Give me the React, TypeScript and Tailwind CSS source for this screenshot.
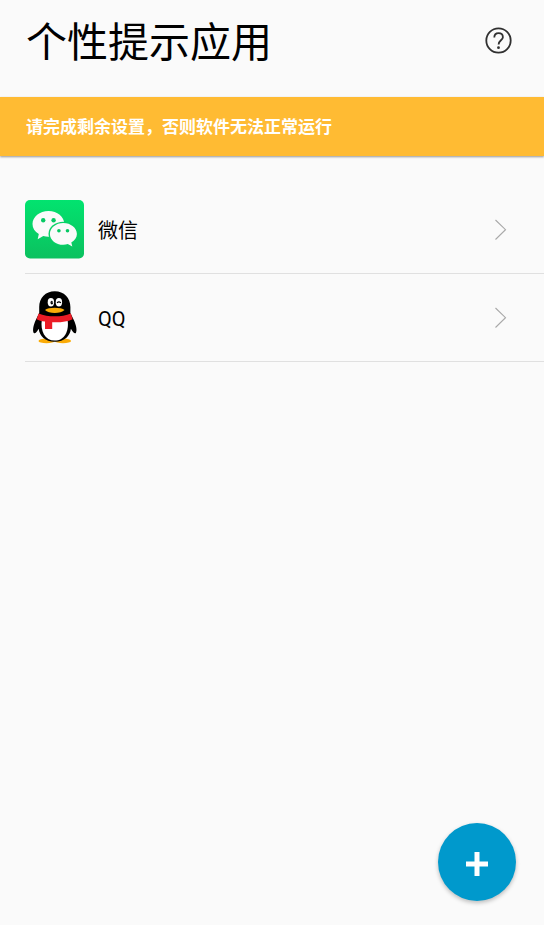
import type { ReactNode } from "react";

function WeChatIcon() {
  return (
    <svg viewBox="0 0 59 59" className="size-full" aria-hidden="true">
      <defs>
        <linearGradient id="wechat-green" x1="0" y1="0" x2="0" y2="1">
          <stop offset="0" stopColor="#02e36f" />
          <stop offset="1" stopColor="#0bc15f" />
        </linearGradient>
      </defs>
      <rect width="59" height="58.500" rx="5" fill="url(#wechat-green)" />
      <path
        d="M23.500 11C14.700 11 7.500 16.800 7.500 24C7.500 28.100 9.800 31.700 13.800 34.100L12.700 39.300L18.200 36C19.900 36.500 21.700 36.800 23.500 36.800C32.300 36.800 39.300 31.200 39.300 24C39.300 16.800 32.300 11 23.500 11Z"
        fill="#fafafa"
      />
      <ellipse cx="38.300" cy="33.800" rx="14.800" ry="12" fill="#07d166" />
      <path
        d="M38.300 23C30.800 23 24.900 28 24.900 33.900C24.900 39.900 30.800 44.800 38.300 44.800C39.800 44.800 41.400 44.500 42.800 44L47.300 46.500L46.300 42.600C49.800 40.300 51.900 37.300 51.900 33.900C51.900 28 45.800 23 38.300 23Z"
        fill="#fafafa"
      />
      <g fill="#05c963">
        <circle cx="18.200" cy="20.300" r="2.200" />
        <circle cx="28.600" cy="20.300" r="2.200" />
        <circle cx="33.900" cy="30.800" r="1.800" />
        <circle cx="42.500" cy="30.800" r="1.800" />
      </g>
    </svg>
  );
}

function QQIcon() {
  return (
    <svg viewBox="0 0 59 59" className="size-full" aria-hidden="true">
      <ellipse cx="21.500" cy="52.900" rx="8" ry="2.400" fill="#faab07" />
      <ellipse cx="38" cy="52.900" rx="8" ry="2.400" fill="#faab07" />
      <path
        d="M29.800 3.300C20.500 3.300 14.200 10 14.200 19V25L10.800 32C8.500 37 7.300 42 8.700 45C10 46.200 12 43.800 13.700 40.800C14.500 48 20 53.800 29.800 53.800C39.500 53.800 45.100 48 45.900 40.800C47.700 43.800 49.500 46.200 50.900 45C52.400 42 51.100 37 48.800 32L45.400 25V19C45.400 10 39 3.300 29.800 3.300Z"
        fill="#000"
      />
      <path d="M16.800 32H42.600C44.300 43 39.500 52.600 29.700 52.600S15.200 43 16.800 32Z" fill="#fff" />
      <ellipse cx="25.900" cy="14.300" rx="3.200" ry="4.200" fill="#fff" />
      <ellipse cx="33.900" cy="14.300" rx="3.200" ry="4.200" fill="#fff" />
      <ellipse cx="26.800" cy="14.600" rx="1.300" ry="1.900" fill="#000" />
      <circle cx="27.200" cy="14" r=".5" fill="#fff" />
      <path d="M32 15Q33.900 12.700 35.900 15" fill="none" stroke="#000" strokeWidth="1.100" />
      <path d="M20 22C23 19 36.500 19 39.500 22C36 25.900 23.500 25.900 20 22Z" fill="#faab07" />
      <path
        d="M13.600 25.500C23 29.300 36.500 29.300 45.900 25.500L47.600 31.200C42.500 33.700 35 34.600 27.200 34.200V41H20V33.600C16.500 33 13.500 32.300 11.600 31.200Z"
        fill="#eb1c26"
      />
    </svg>
  );
}

function AppRow({ name, icon }: { name: string; icon: ReactNode }) {
  return (
    <li className="border-b border-[#e0e0e0]">
      <button type="button" className="flex h-[87px] w-full items-center pr-9 text-left">
        <span className="size-[59px] shrink-0">{icon}</span>
        <span className="ml-[14px] flex-1 pt-0.5 text-[20px] leading-7">{name}</span>
        <svg
          viewBox="0 0 14 22"
          className="h-[22px] w-[14px]"
          fill="none"
          stroke="#a8a8a8"
          strokeWidth="1.100"
          aria-hidden="true"
        >
          <path d="M1.500 1L11.500 10.700L1.500 20.500" />
        </svg>
      </button>
    </li>
  );
}

export default function App() {
  return (
    <div className="min-h-screen bg-[#fafafa] font-[Roboto,'Noto_Sans_CJK_SC',sans-serif] text-black">
      <header className="flex h-[97px] items-start justify-between pt-[13px] pr-8 pl-[26px]">
        <h1 className="text-[41px] leading-[60px]">个性提示应用</h1>
        <button type="button" aria-label="帮助" className="mt-[14px] size-[27px]">
          <svg
            viewBox="0 0 27 27"
            className="size-full"
            fill="none"
            stroke="#303030"
            strokeWidth="1.800"
            aria-hidden="true"
          >
            <circle cx="13.500" cy="13.500" r="12.200" />
            <path d="M9.300 10.600C9.300 7.800 11 6.200 13.600 6.200S17.900 7.800 17.900 10.200C17.900 13.200 13.600 13.500 13.600 17.400" />
            <circle cx="13.500" cy="20.700" r="1.400" fill="#303030" stroke="none" />
          </svg>
        </button>
      </header>

      <p
        role="status"
        className="flex h-[59px] items-center bg-[#ffbb33] px-[26px] pt-0.5 text-[17px] font-bold text-white shadow-[0_1px_2px_rgba(0,0,0,0.4)]"
      >
        请完成剩余设置，否则软件无法正常运行
      </p>

      <ul className="mt-[30px] ml-[25px]">
        <AppRow name="微信" icon={<WeChatIcon />} />
        <AppRow name="QQ" icon={<QQIcon />} />
      </ul>

      <button
        type="button"
        aria-label="添加"
        className="fixed right-7 bottom-6 flex size-[78px] items-center justify-center rounded-full bg-[#0099cc] pt-1 shadow-[0_2px_4px_rgba(0,0,0,0.25)]"
      >
        <svg viewBox="0 0 24 24" className="size-6" stroke="#fff" strokeWidth="5" aria-hidden="true">
          <path d="M12 0V24M1 12H23" />
        </svg>
      </button>
    </div>
  );
}
